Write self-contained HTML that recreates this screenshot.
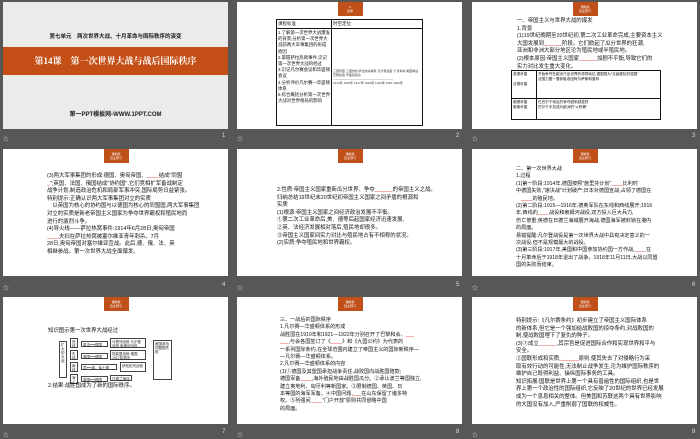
<!DOCTYPE html>
<html><head><meta charset="utf-8"><style>
*{margin:0;padding:0;box-sizing:border-box}
body{width:700px;height:438px;background:#575757;position:relative;overflow:hidden;font-family:"Liberation Sans","Noto Sans CJK SC",sans-serif}
.s{position:absolute;width:225px;height:127px;background:#fff;overflow:hidden}
.tab{position:absolute;left:50%;margin-left:-12px;top:0;width:25px;height:14px;background:#c0501a;color:#fff;font-size:3px;text-align:center;line-height:4px;padding-top:3px}
.lb{position:absolute;color:#ddd;font-size:6px}
.t{position:absolute;font-size:5.4px;line-height:7.6px;color:#111;white-space:nowrap}
.r{color:#e02020}
table{border-collapse:collapse;position:absolute;font-size:4.5px;color:#111;line-height:6px}
td{border:1.5px solid #111;vertical-align:top;padding:1px}
.box{position:absolute;border:1px solid #444;font-size:3.5px;color:#222;background:#fff;line-height:4px;padding:1px}
</style></head><body>

<div class="s" style="left:3px;top:2px;background:#ebebeb">
 <div style="position:absolute;top:30px;width:100%;text-align:center;font-size:5.5px;font-weight:bold;color:#222">第七单元　两次世界大战、十月革命与国际秩序的演变</div>
 <div style="position:absolute;top:45px;left:0;width:225px;height:28px;background:#c44f16;color:#fff;font-size:9px;font-weight:bold;text-align:center;line-height:28px;font-family:'Liberation Serif','Noto Serif CJK SC',serif">第14课　第一次世界大战与战后国际秩序</div>
 <div style="position:absolute;top:107px;width:100%;text-align:center;font-size:6px;font-weight:bold;color:#222">第一PPT模板网-WWW.1PPT.COM</div>
</div>
<div class="lb" style="left:3px;top:134px">☆</div><div class="lb" style="left:222px;top:133px">1</div>

<div class="s" style="left:237px;top:2px">
 <div class="tab">4<br>目录</div>
 <table style="left:39px;top:17px;width:147px;height:107px">
  <tr><td style="width:55px;height:6px">课程标准</td><td>时空定位</td></tr>
  <tr><td style="font-size:4.4px;line-height:6.2px">1.了解第一次世界大战爆发的背景,分析第一次世界大战前两大军事集团的形成原因<br>2.掌握萨拉热窝事件,识记第一次世界大战的经过<br>3.识记凡尔赛会议和华盛顿会议<br>4.分析评价凡尔赛—华盛顿体系<br>5.综合概括分析第一次世界大战对世界格局的影响</td>
  <td style="font-size:3px;line-height:4px;padding-top:40px;color:#333">三国同盟 三国协约 萨拉热窝事件 凡尔登战役 十月革命 美国参战 巴黎和会 华盛顿会议<br>————————————————————<br>1914年 1916年 1917年 1918年 1919年 1921-1922年</td></tr>
 </table>
</div>
<div class="lb" style="left:237px;top:134px">☆</div><div class="lb" style="left:456px;top:133px">2</div>

<div class="s" style="left:472px;top:2px">
 <div class="tab">课前篇<br>自主预习</div>
 <div class="t" style="left:45px;top:16px">一、帝国主义与世界大战的爆发<br>1.背景<br>(1)19世纪晚期至20世纪初,第二次工业革命完成,主要资本主义<br>大国发展到<span class="r">______</span>阶段。它们掀起了瓜分世界的狂潮,<br>亚洲和非洲大部分地区沦为殖民地或半殖民地。<br>(2)根本原因:帝国主义国家<span class="r">______</span>加剧不平衡,导致它们的<br>实力对比发生重大变化。</div>
 <table style="left:39px;top:68px;width:150px;height:50px;font-size:3.6px;line-height:5px">
  <tr><td style="width:25px">英德矛盾<br><br>法德矛盾</td><td>开始争夺在欧洲乃至世界的领导地位,德国视为"无敌舰队的强国"<br>法国力图一雪前耻收回阿尔萨斯和洛林</td></tr>
  <tr><td>俄德矛盾<br>俄奥矛盾</td><td>在巴尔干地区的争夺越来越激烈<br>巴尔干半岛成为欧洲的"火药桶"</td></tr>
 </table>
</div>
<div class="lb" style="left:472px;top:134px">☆</div><div class="lb" style="left:692px;top:133px">3</div>

<div class="s" style="left:3px;top:149px">
 <div class="tab">课前篇<br>自主预习</div>
 <div class="t" style="left:44px;top:24px">(3)两大军事集团的形成:德国、奥匈帝国、<span class="r">____</span>结成"同盟<br><span class="r">_</span>";英国、法国、俄国结成"协约国",它们竞相扩军备战制定<br>战争计划,制造政治危机和局部军事冲突,国际局势日益紧张。<br>特别提示:正确认识两大军事集团对立的实质<br>　以英国为核心的协约国与以德国为核心的同盟国,两大军事集团<br>对立的实质是新老帝国主义国家为争夺世界霸权和殖民地而<br>进行的激烈斗争。<br>(4)导火线——萨拉热窝事件:1914年6月28日,奥匈帝国<br><span class="r">____</span>夫妇在萨拉热窝被塞尔维亚青年刺杀。7月<br>28日,奥匈帝国对塞尔维亚宣战。此后,德、俄、法、英<br>相继参战。第一次世界大战全面爆发。</div>
</div>
<div class="lb" style="left:3px;top:283px">☆</div><div class="lb" style="left:222px;top:282px">4</div>

<div class="s" style="left:237px;top:149px">
 <div class="tab">课前篇<br>自主预习</div>
 <div class="t" style="left:40px;top:38px">2.性质:帝国主义国家重新瓜分世界、争夺<span class="r">______</span>的帝国主义之战。<br>归纳总结19世纪末20世纪初帝国主义国家之间矛盾的根源和<br>实质<br>(1)根源:帝国主义国家之间经济政治发展不平衡。<br>①第二次工业革命后,美、德等后起国家经济迅速发展,<br>②英、法经济发展相对落后,殖民地却很多。<br>③帝国主义国家间实力对比与殖民地占有不相称的状况。<br>(2)实质:争夺殖民地和世界霸权。</div>
</div>
<div class="lb" style="left:237px;top:283px">☆</div><div class="lb" style="left:456px;top:282px">5</div>

<div class="s" style="left:472px;top:149px">
 <div class="tab">课前篇<br>自主预习</div>
 <div class="t" style="left:44px;top:17px;font-size:5.1px;line-height:7.4px">二、第一次世界大战<br>1.过程<br>(1)第一阶段:1914年,德国按照"施里芬计划"<span class="r">____</span>比利时<br>中德国失败,"速决战"计划破产;日本对德国宣战,占领了德国在<br>　<span class="r">____</span>的殖民地。<br>(2)第二阶段:1915—1916年,德奥军队在东线和西线展开;1916<br>年,西线的<span class="r">____</span>战役和索姆河战役,双方投入巨大兵力,<br>伤亡惨重;英德在日德兰海域展开海战,德国海军被封锁在港内<br>的局面。<br>易错提醒:凡尔登战役是第一次世界大战中具有决定意义的一<br>次战役,但不是规模最大的战役。<br>(3)第三阶段:1917年,美国和中国参加协约国一方作战,<span class="r">____</span>在<br>十月革命后于1918年退出了战争。1918年11月11日,大战以同盟<br>国的失败而结束。</div>
</div>
<div class="lb" style="left:472px;top:283px">☆</div><div class="lb" style="left:692px;top:282px">6</div>

<div class="s" style="left:3px;top:297px">
 <div class="tab">课前篇<br>自主预习</div>
 <div class="t" style="left:45px;top:31px">知识图示第一次世界大战经过</div>
 <div class="box" style="left:56px;top:44px;width:8px;height:37px">扩大的大战</div>
 <div class="box" style="left:67px;top:41px;width:8px;height:10px">西线</div>
 <div class="box" style="left:67px;top:53px;width:8px;height:10px">东线</div>
 <div class="box" style="left:67px;top:65px;width:8px;height:10px">南线</div>
 <div class="box" style="left:67px;top:77px;width:8px;height:10px">海上</div>
 <div class="box" style="left:78px;top:44px;width:27px;height:6px">英法⟷德国</div>
 <div class="box" style="left:78px;top:56px;width:27px;height:6px">俄国⟷德国</div>
 <div class="box" style="left:78px;top:67px;width:36px;height:6px">意⟷奥、保土德</div>
 <div class="box" style="left:78px;top:79px;width:27px;height:6px">英国⟷德国</div>
 <div class="box" style="left:107px;top:41px;width:36px;height:10px">马恩河战役 凡尔登战役 索姆河战役</div>
 <div class="box" style="left:107px;top:53px;width:36px;height:10px">坦能堡战役 俄国1917年退出</div>
 <div class="box" style="left:117px;top:65px;width:26px;height:10px">伊松佐河战役</div>
 <div class="box" style="left:107px;top:78px;width:22px;height:6px">日德兰海战</div>
 <div class="box" style="left:150px;top:43px;width:19px;height:40px">美国参战 同盟国失败</div>
 <div class="t" style="left:45px;top:86px">2.结果:战胜国成为了新的国际秩序。</div>
</div>
<div class="lb" style="left:3px;top:430px">☆</div><div class="lb" style="left:222px;top:429px">7</div>

<div class="s" style="left:237px;top:297px">
 <div class="tab">课前篇<br>自主预习</div>
 <div class="t" style="left:43px;top:20px;font-size:5.1px;line-height:7.4px">三、一战后的国际秩序<br>1.凡尔赛—华盛顿体系的形成<br>战胜国在1919年和1921—1922年分别召开了巴黎和会、<span class="r">___</span><br><span class="r">___</span>,与会各国签订了《<span class="r">____</span>》和《九国公约》为代表的<br>一系列国际条约,在全球范围内建立了帝国主义的国际新秩序—<br>—凡尔赛—华盛顿体系。<br>2.凡尔赛—华盛顿体系的内容<br>(1)①德国及其盟国承担战争责任,战败国向战胜国赔款;<br>德国军备<span class="r">____</span>,海外殖民地由战胜国瓜分。②承认波兰等国独立,<br>建立奥地利、匈牙利等新国家。③限制德国、英国、日<br>本等国的海军军备。④中国问题,<span class="r">___</span>在山东保留了诸多特<br>权。⑤列强间<span class="r">____</span>"门户开放"原则共同侵略中国<br>的局面。</div>
</div>
<div class="lb" style="left:237px;top:430px">☆</div><div class="lb" style="left:456px;top:429px">8</div>

<div class="s" style="left:472px;top:297px">
 <div class="tab">课前篇<br>自主预习</div>
 <div class="t" style="left:44px;top:21px">特别提示:《凡尔赛条约》初步建立了帝国主义国际体系<br>的新体系,但它是一个强加给战败国的掠夺条约,对战败国的<br>制,使战败国埋下了复仇的种子。<br>(3)①成立<span class="r">______</span>,其宗旨是促进国际合作和实现世界和平与<br>安全。<br>②国联形成和实质,<span class="r">______</span>原则,使其失去了对侵略行为采<br>取有效行动的可能性,无法制止战争发生,沦为维护国际秩序的<br>维护自己既得利益、操纵国际事务的工具。<br>知识拓展:国联是世界上第一个具有普遍性的国际组织,也是世<br>界上第一个政治性的国际组织,它反映了20世纪的世界已经发展<br>成为一个息息相关的整体。但美国和苏联这两个具有世界影响<br>的大国没有加入,严重削弱了国联的权威性。</div>
</div>
<div class="lb" style="left:472px;top:430px">☆</div><div class="lb" style="left:692px;top:429px">9</div>
</body></html>
